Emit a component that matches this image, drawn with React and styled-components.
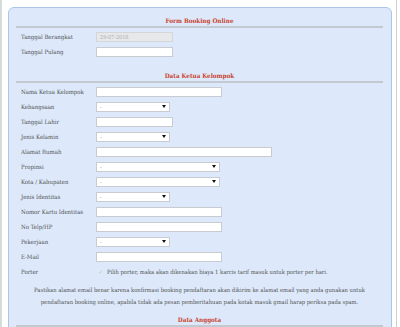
import React from 'react'
import styled, { createGlobalStyle } from 'styled-components'

const GlobalStyle = createGlobalStyle`
  html, body {
    margin: 0;
    padding: 0;
    background: #ffffff;
  }
  body {
    font-family: "DejaVu Serif Condensed", "DejaVu Serif", serif;
    font-size: 5.8px;
    color: #505050;
  }
`

const Page = styled.div`
  width: 397px;
  height: 327px;
  overflow: hidden;
  border-left: 2px solid #d3ddd9;
  border-right: 1px solid #cfcfcf;
  padding: 7px 0 0 6px;
  box-sizing: border-box;
`

const Panel = styled.div`
  width: 384px;
  box-sizing: border-box;
  background: #dde9fb;
  border: 1px solid #a9c6e6;
  border-radius: 6px;
  padding: 8px 8px 12px 7px;
  height: 340px;
`

const Heading = styled.div`
  text-align: center;
  font-weight: bold;
  color: #c9412c;
  font-size: 6.3px;
  line-height: 9px;
  margin-top: ${p => p.$gap || 0}px;
  padding-bottom: 1px;
  border-bottom: 2px solid #c3c9d1;
`

const Rows = styled.div`
  display: flex;
  flex-direction: column;
  padding: 1px 0 0 5px;
`

const Row = styled.div`
  display: grid;
  grid-template-columns: 75px 1fr;
  align-items: center;
  height: 15px;
`

const Label = styled.span`
  white-space: nowrap;
  font-size: 6px;
`

const Input = styled.div`
  width: ${p => p.$w}px;
  height: 10px;
  box-sizing: border-box;
  background: ${p => (p.$disabled ? '#e6e8ea' : '#ffffff')};
  border: 1px solid ${p => (p.$disabled ? '#d4d6d8' : '#c8cbd0')};
  color: #b0b0b0;
  font-size: 5.5px;
  line-height: 8px;
  padding-left: 3px;
`

const Select = styled.div`
  width: ${p => p.$w}px;
  height: 10px;
  box-sizing: border-box;
  background: #ffffff;
  border: 1px solid #c8cbd0;
  display: flex;
  align-items: center;
  justify-content: space-between;
  padding: 0 3px;
  font-size: 5.5px;
  color: #888;
`

const Arrow = styled.span`
  width: 0;
  height: 0;
  border-left: 2px solid transparent;
  border-right: 2px solid transparent;
  border-top: 3px solid #111;
`

const PorterText = styled.span`
  display: flex;
  align-items: center;
  gap: 4px;
  padding-left: 2px;
  white-space: nowrap;
`

const Check = styled.span`
  width: 5px;
  height: 5px;
  color: #c4c8cc;
  font-size: 6px;
  line-height: 5px;
`

const Note = styled.p`
  margin: 5px auto 0;
  width: 345px;
  text-align: center;
  line-height: 12px;
`

const fields = [
  { label: 'Nama Ketua Kelompok', type: 'input', w: 126 },
  { label: 'Kebangsaan', type: 'select', w: 74 },
  { label: 'Tanggal Lahir', type: 'input', w: 77 },
  { label: 'Jenis Kelamin', type: 'select', w: 74 },
  { label: 'Alamat Rumah', type: 'input', w: 176 },
  { label: 'Propinsi', type: 'select', w: 124 },
  { label: 'Kota / Kabupaten', type: 'select', w: 124 },
  { label: 'Jenis Identitas', type: 'select', w: 74 },
  { label: 'Nomor Kartu Identitas', type: 'input', w: 126 },
  { label: 'No Telp/HP', type: 'input', w: 126 },
  { label: 'Pekerjaan', type: 'select', w: 74 },
  { label: 'E-Mail', type: 'input', w: 126 },
]

const App = () => (
  <>
    <GlobalStyle />
    <Page>
      <Panel>
        <Heading>Form Booking Online</Heading>
        <Rows>
          <Row>
            <Label>Tanggal Berangkat</Label>
            <Input $w={77} $disabled>29-07-2018</Input>
          </Row>
          <Row>
            <Label>Tanggal Pulang</Label>
            <Input $w={77} />
          </Row>
        </Rows>

        <Heading $gap={12}>Data Ketua Kelompok</Heading>
        <Rows>
          {fields.map(f => (
            <Row key={f.label}>
              <Label>{f.label}</Label>
              {f.type === 'select' ? (
                <Select $w={f.w}>-<Arrow /></Select>
              ) : (
                <Input $w={f.w} />
              )}
            </Row>
          ))}
          <Row>
            <Label>Porter</Label>
            <PorterText>
              <Check>✓</Check>
              Pilih porter, maka akan dikenakan biaya 1 karcis tarif masuk untuk porter per hari.
            </PorterText>
          </Row>
        </Rows>

        <Note>
          Pastikan alamat email benar karena konfirmasi booking pendaftaran akan dikirim ke alamat email yang anda gunakan untuk pendaftaran booking online, apabila tidak ada pesan pemberitahuan pada kotak masuk gmail harap periksa pada spam.
        </Note>

        <Heading $gap={7}>Data Anggota</Heading>
      </Panel>
    </Page>
  </>
)

export default App
